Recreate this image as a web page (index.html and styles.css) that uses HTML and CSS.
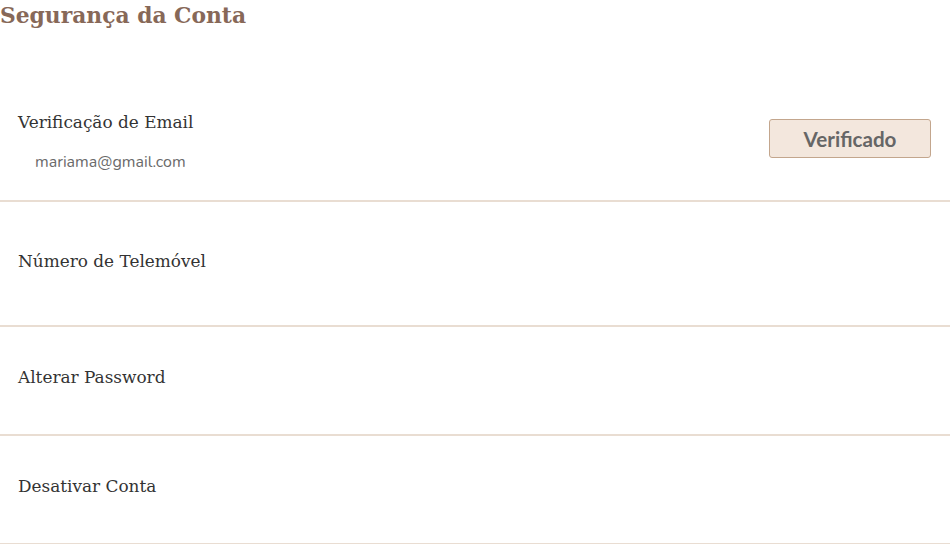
FILE: index.html
```html
<!DOCTYPE html>
<html lang="pt">
<head>
<meta charset="utf-8">
<title>Segurança da Conta</title>
<link rel="stylesheet" href="styles.css">
</head>
<body>
<main class="page">
  <h2 class="title">Segurança da Conta</h2>
  <section class="list">
    <div class="row row-first">
      <div class="info">
        <div class="label">Verificação de Email</div>
        <div class="sub">mariama@gmail.com</div>
      </div>
      <button class="btn" type="button">Verificado</button>
    </div>
    <div class="row row-tall">
      <div class="label">Número de Telemóvel</div>
    </div>
    <div class="row">
      <div class="label">Alterar Password</div>
    </div>
    <div class="row">
      <div class="label">Desativar Conta</div>
    </div>
  </section>
</main>
</body>
</html>
```

FILE: styles.css
```css
html, body {
  margin: 0;
  padding: 0;
  background: #ffffff;
}
.page {
  width: 950px;
}
.title {
  margin: 0;
  height: 32px;
  line-height: 32px;
  font-family: "DejaVu Serif", serif;
  font-weight: bold;
  font-size: 21.8px;
  color: #876858;
}
.list {
  display: flex;
  flex-direction: column;
}
.row {
  display: flex;
  justify-content: space-between;
  align-items: center;
  padding: 38px 19px 45px 18px;
  border-bottom: 2px solid #e9ddd2;
}
.row-first {
  padding-top: 78px;
  padding-bottom: 28px;
  align-items: flex-start;
}
.row-tall {
  padding-top: 47px;
  padding-bottom: 52px;
}
.info {
  display: flex;
  flex-direction: column;
  gap: 18px;
}
.label {
  font-family: "DejaVu Serif", serif;
  font-size: 16.9px;
  line-height: 24px;
  color: #333333;
}
.sub {
  padding-left: 17px;
  font-family: "Nunito", "Lato", sans-serif;
  font-size: 16px;
  line-height: 20px;
  color: #6a6a6a;
}
.btn {
  margin-top: 9px;
  width: 162px;
  height: 39px;
  background: #f3e7dd;
  border: 1px solid #c3a68d;
  border-radius: 3px;
  font-family: "Lato", sans-serif;
  font-weight: bold;
  font-size: 20.6px;
  color: #666666;
  padding: 0;
}
```
